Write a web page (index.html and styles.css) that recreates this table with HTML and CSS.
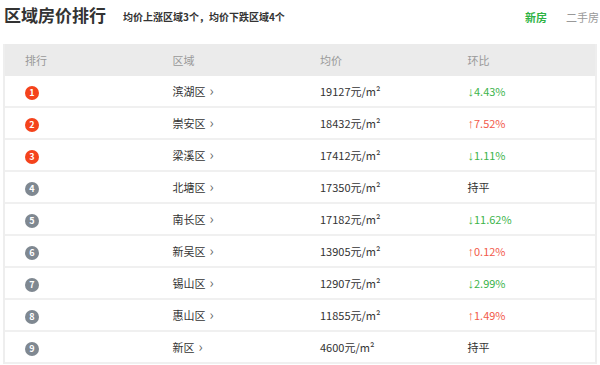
FILE: index.html
```html
<!DOCTYPE html>
<html lang="zh-CN">
<head>
  <meta charset="UTF-8">
  <title>区域房价排行</title>
  <link rel="stylesheet" href="styles.css">
</head>
<body>
  <div class="panel">
    <div class="head">
      <h2 class="title">区域房价排行</h2>
      <span class="summary">均价上涨区域3个，均价下跌区域4个</span>
      <div class="tabs">
        <span class="tab active">新房</span>
        <span class="tab">二手房</span>
      </div>
    </div>
    <div class="rank-table">
      <div class="row row-head">
        <span>排行</span><span>区域</span><span>均价</span><span>环比</span>
      </div>
      <div class="row">
        <span><i class="badge top">1</i></span><span class="area">滨湖区</span><span>19127元/m²</span><span class="down"><b>↓</b>4.43%</span>
      </div>
      <div class="row">
        <span><i class="badge top">2</i></span><span class="area">崇安区</span><span>18432元/m²</span><span class="up"><b>↑</b>7.52%</span>
      </div>
      <div class="row">
        <span><i class="badge top">3</i></span><span class="area">梁溪区</span><span>17412元/m²</span><span class="down"><b>↓</b>1.11%</span>
      </div>
      <div class="row">
        <span><i class="badge">4</i></span><span class="area">北塘区</span><span>17350元/m²</span><span>持平</span>
      </div>
      <div class="row">
        <span><i class="badge">5</i></span><span class="area">南长区</span><span>17182元/m²</span><span class="down"><b>↓</b>11.62%</span>
      </div>
      <div class="row">
        <span><i class="badge">6</i></span><span class="area">新吴区</span><span>13905元/m²</span><span class="up"><b>↑</b>0.12%</span>
      </div>
      <div class="row">
        <span><i class="badge">7</i></span><span class="area">锡山区</span><span>12907元/m²</span><span class="down"><b>↓</b>2.99%</span>
      </div>
      <div class="row">
        <span><i class="badge">8</i></span><span class="area">惠山区</span><span>11855元/m²</span><span class="up"><b>↑</b>1.49%</span>
      </div>
      <div class="row">
        <span><i class="badge">9</i></span><span class="area">新区</span><span>4600元/m²</span><span>持平</span>
      </div>
    </div>
  </div>
</body>
</html>
```

FILE: styles.css
```css
body {
  margin: 0;
  font-family: "Noto Sans CJK SC", "Noto Sans", sans-serif;
  color: #333;
  background: #fff;
  overflow: hidden;
}
.panel {
  width: 600px;
}
.head {
  display: flex;
  align-items: center;
  height: 30px;
  padding: 0 0 0 4px;
  margin-bottom: 14px;
}
.title {
  margin: 0;
  font-size: 17px;
  font-weight: 700;
  color: #333;
  line-height: 28px;
}
.summary {
  margin-left: 17px;
  margin-top: 3px;
  font-size: 10px;
  font-weight: 700;
  color: #333;
}
.tabs {
  margin-left: auto;
  display: flex;
  gap: 19px;
  margin-top: 3px;
  margin-right: 1px;
}
.tab {
  font-size: 11px;
  color: #999;
}
.tab.active {
  color: #2fb344;
  font-weight: 700;
}
.rank-table {
  margin: 0 3px;
  border-left: 2px solid #eee;
  border-right: 2px solid #eee;
}
.row {
  display: grid;
  grid-template-columns: repeat(4, 1fr);
  height: 32px;
  align-items: center;
  border-bottom: 2px solid #f0f0f0;
  box-sizing: border-box;
  font-size: 11px;
}
.row span {
  padding-left: 20px;
}
.row-head {
  background: #ebebeb;
  color: #999;
  border-bottom: none;
}
.area::after {
  content: "›";
  margin-left: 4px;
  font-size: 14px;
  color: #666;
  line-height: 1;
}
.row b {
  font-family: "Liberation Sans", sans-serif;
  font-size: 13px;
  font-weight: 700;
  line-height: 1;
}
.badge {
  display: inline-flex;
  align-items: center;
  justify-content: center;
  width: 14px;
  height: 14px;
  border-radius: 50%;
  background: #7f8891;
  color: #fff;
  font-style: normal;
  font-size: 9px;
  font-weight: 700;
  vertical-align: middle;
}
.badge.top {
  background: #f4431c;
}
.up {
  color: #f25a4a;
}
.down {
  color: #3cb44b;
}
```
